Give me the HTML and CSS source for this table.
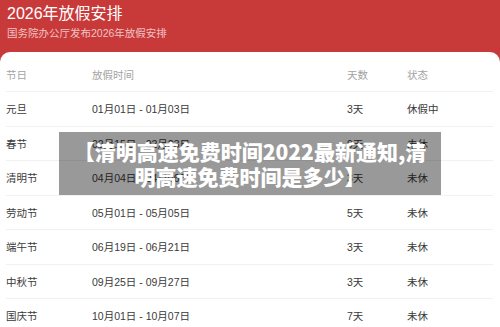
FILE: index.html
```html
<!DOCTYPE html>
<html lang="zh-CN">
<head>
<meta charset="utf-8">
<title>2026年放假安排</title>
<link rel="stylesheet" href="styles.css">
</head>
<body>
<div class="page">
  <header class="header">
    <h1 class="title">2026年放假安排</h1>
    <p class="subtitle">国务院办公厅发布2026年放假安排</p>
  </header>
  <main class="card">
    <div class="row head">
      <span>节日</span><span>放假时间</span><span>天数</span><span>状态</span>
    </div>
    <div class="row"><span>元旦</span><span>01月01日 - 01月03日</span><span>3天</span><span>休假中</span></div>
    <div class="row"><span>春节</span><span>02月15日 - 02月23日</span><span>9天</span><span>未休</span></div>
    <div class="row"><span>清明节</span><span>04月04日 - 04月06日</span><span>3天</span><span>未休</span></div>
    <div class="row"><span>劳动节</span><span>05月01日 - 05月05日</span><span>5天</span><span>未休</span></div>
    <div class="row"><span>端午节</span><span>06月19日 - 06月21日</span><span>3天</span><span>未休</span></div>
    <div class="row"><span>中秋节</span><span>09月25日 - 09月27日</span><span>3天</span><span>未休</span></div>
    <div class="row"><span>国庆节</span><span>10月01日 - 10月07日</span><span>7天</span><span>未休</span></div>
  </main>
</div>
<div class="overlay">
  <p class="overlay-text">【清明高速免费时间2022最新通知,清明高速免费时间是多少】</p>
</div>
</body>
</html>
```

FILE: styles.css
```css
html, body {
  margin: 0;
  padding: 0;
}
body {
  width: 500px;
  height: 327px;
  overflow: hidden;
  font-family: "Liberation Sans", "Noto Sans CJK SC", sans-serif;
  background: #ffffff;
}
.page {
  background: #c83a3a;
  min-height: 327px;
}
.header {
  height: 52px;
  box-sizing: border-box;
  padding: 4px 7px 0;
  color: #ffffff;
}
.title {
  margin: 0;
  font-size: 16px;
  line-height: 19px;
  font-weight: normal;
  font-family: "Liberation Sans", "Noto Sans CJK SC", sans-serif;
}
.subtitle {
  margin: 3px 0 0;
  font-size: 10.5px;
  line-height: 14px;
  color: #f1c3c3;
}
.card {
  display: block;
  background: #ffffff;
  border-radius: 10px 10px 0 0;
  padding: 5.5px 7px 0 6px;
  min-height: 275px;
  box-sizing: border-box;
}
.row {
  display: grid;
  grid-template-columns: 86px 255px 60px 1fr;
  align-items: center;
  height: 34.5px;
  box-sizing: border-box;
  border-bottom: 1px solid #f1f1f1;
  font-size: 10.5px;
  color: #3a3a3a;
}
.row.head {
  color: #a3a3a3;
}
.overlay {
  position: absolute;
  left: 59px;
  top: 132px;
  width: 382px;
  height: 63px;
  box-sizing: border-box;
  padding: 6px 12px;
  background: rgba(0, 0, 0, 0.4);
  display: flex;
  align-items: center;
  justify-content: center;
}
.overlay-text {
  margin: 0;
  color: #ffffff;
  font-family: "Noto Sans CJK SC", sans-serif;
  font-weight: 900;
  font-size: 21px;
  line-height: 25px;
  text-align: center;
}
```
